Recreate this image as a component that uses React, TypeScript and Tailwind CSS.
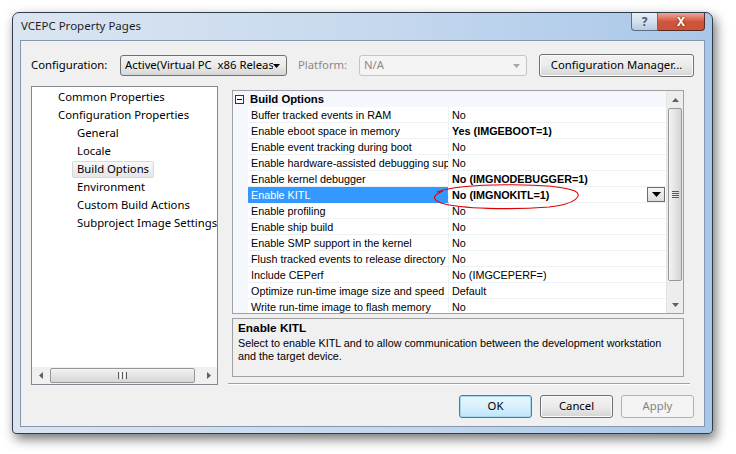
import React from 'react';

type Row = { name: string; value: string; bold?: boolean; selected?: boolean };

const ROWS: Row[] = [
  { name: 'Buffer tracked events in RAM', value: 'No' },
  { name: 'Enable eboot space in memory', value: 'Yes (IMGEBOOT=1)', bold: true },
  { name: 'Enable event tracking during boot', value: 'No' },
  { name: 'Enable hardware-assisted debugging support', value: 'No' },
  { name: 'Enable kernel debugger', value: 'No (IMGNODEBUGGER=1)', bold: true },
  { name: 'Enable KITL', value: 'No (IMGNOKITL=1)', bold: true, selected: true },
  { name: 'Enable profiling', value: 'No' },
  { name: 'Enable ship build', value: 'No' },
  { name: 'Enable SMP support in the kernel', value: 'No' },
  { name: 'Flush tracked events to release directory', value: 'No' },
  { name: 'Include CEPerf', value: 'No (IMGCEPERF=)' },
  { name: 'Optimize run-time image size and speed', value: 'Default' },
  { name: 'Write run-time image to flash memory', value: 'No' },
];

const TREE = [
  { label: 'Common Properties', depth: 0 },
  { label: 'Configuration Properties', depth: 0 },
  { label: 'General', depth: 1 },
  { label: 'Locale', depth: 1 },
  { label: 'Build Options', depth: 1, selected: true },
  { label: 'Environment', depth: 1 },
  { label: 'Custom Build Actions', depth: 1 },
  { label: 'Subproject Image Settings', depth: 1 },
];

function Arrow({ dir, color = '#4d4d4d' }: { dir: 'up' | 'down' | 'left' | 'right'; color?: string }) {
  const pts = {
    up: '0,4 3.5,0 7,4',
    down: '0,0 7,0 3.5,4',
    left: '4,0 4,7 0,3.5',
    right: '0,0 0,7 4,3.5',
  }[dir];
  const vertical = dir === 'up' || dir === 'down';
  return (
    <svg width={vertical ? 7 : 4} height={vertical ? 4 : 7} viewBox={vertical ? '0 0 7 4' : '0 0 4 7'}>
      <polygon points={pts} fill={color} />
    </svg>
  );
}

function Combo({ text, width, disabled }: { text: string; width: string; disabled?: boolean }) {
  return (
    <div
      className={`${width} h-[21px] flex items-center rounded-[3px] border pl-[4px] pr-[6px] ${
        disabled
          ? 'border-[#c5c5c5] bg-[#f4f4f4] text-[#8a8a8a]'
          : 'border-[#707070] bg-gradient-to-b from-[#f3f3f3] via-[#ebebeb] to-[#d6d6d6] text-black'
      }`}
    >
      <span className="flex-1 overflow-hidden whitespace-pre">{text}</span>
      <Arrow dir="down" color={disabled ? '#a6a6a6' : '#000'} />
    </div>
  );
}

function Button({ label, width, kind }: { label: string; width: string; kind?: 'default' | 'disabled' }) {
  const style =
    kind === 'default'
      ? 'border-[#3c7fb1] bg-gradient-to-b from-[#eaf6fd] via-[#d9f0fc] to-[#bee6fd] shadow-[inset_0_0_0_1px_#a7d8f3]'
      : kind === 'disabled'
      ? 'border-[#adb2b5] bg-[#f4f4f4] text-[#838383]'
      : 'border-[#707070] bg-gradient-to-b from-[#f2f2f2] via-[#ebebeb] to-[#d5d5d5] shadow-[inset_0_0_0_1px_#fcfcfc]';
  return (
    <div className={`${width} h-[23px] flex items-center justify-center rounded-[3px] border ${style}`}>{label}</div>
  );
}

export default function App() {
  return (
    <div className="w-[736px] h-[454px] bg-white overflow-hidden pl-[12px] pt-[12px] font-['Noto_Sans',sans-serif] text-[11.3px] text-black">
      {/* Window frame */}
      <div className="w-[701px] h-[422px] flex flex-col rounded-t-[7px] rounded-b-[4px] border border-[#2f3d4d] bg-gradient-to-r from-[#dbe5f1] via-[#c7d9ee] to-[#a9c7e9] shadow-[3px_5px_12px_rgba(0,0,0,0.55)] px-[7px] pb-[6px]">
        {/* Title bar */}
        <div className="h-[27px] flex items-start">
          <div className="pt-[4px] pl-[1px] text-[11.5px] text-[#1e1e1e] leading-[18px]">VCEPC Property Pages</div>
          <div className="ml-auto flex">
            <div className="w-[27px] h-[18px] flex items-center justify-center rounded-bl-[4px] border border-t-0 border-[#5d6d82] bg-gradient-to-b from-[#e7eef6] via-[#d4e0ee] to-[#b9cade] text-[12px] font-bold text-[#4a5a6e] leading-none">
              ?
            </div>
            <div className="w-[47px] h-[18px] flex items-center justify-center rounded-br-[4px] border border-l-0 border-t-0 border-[#5d2a22] bg-gradient-to-b from-[#e9a99a] via-[#d2543b] to-[#c9533c] text-[12px] font-bold text-white leading-none [text-shadow:0_0_2px_#3b1208]">
              X
            </div>
          </div>
        </div>

        {/* Client area */}
        <div className="flex-1 border border-[#8497ae] bg-[#f0f0f0] pt-[13px] px-[10px]">
          {/* Configuration row */}
          <div className="h-[23px] flex items-center">
            <div className="w-[89px]">Configuration:</div>
            <Combo text="Active(Virtual PC  x86 Release)" width="w-[167px]" />
            <div className="w-[72px] pl-[11px] text-[#8a8a8a]">Platform:</div>
            <Combo text="N/A" width="w-[168px]" disabled />
            <div className="ml-auto">
              <Button label="Configuration Manager..." width="w-[155px]" />
            </div>
          </div>

          {/* Main area */}
          <div className="mt-[9px] h-[299px] flex">
            {/* Tree */}
            <div className="w-[187px] h-full flex flex-col border border-[#828790] bg-white">
              <div className="flex-1 pt-[1px]">
                {TREE.map((t) => (
                  <div key={t.label} className="h-[18px] flex items-center">
                    <div
                      className={`${t.depth === 0 ? 'ml-[21px]' : 'ml-[40px]'} h-[17px] px-[4px] flex items-center whitespace-nowrap rounded-[2px] border ${
                        t.selected
                          ? 'border-[#d9d9d9] bg-gradient-to-b from-[#f8f8f8] to-[#e5e5e5]'
                          : 'border-transparent'
                      }`}
                    >
                      {t.label}
                    </div>
                  </div>
                ))}
              </div>
              <div className="h-[17px] flex items-center bg-[#f0f0f0]">
                <div className="w-[17px] flex justify-center">
                  <Arrow dir="left" color="#606060" />
                </div>
                <div className="ml-[1px] w-[145px] h-[15px] flex items-center justify-center rounded-[2px] border border-[#979797] bg-gradient-to-b from-[#f2f2f2] to-[#d6d6d6]">
                  <div className="flex gap-[1px]">
                    <div className="w-[1px] h-[7px] bg-[#5a5a5a]" />
                    <div className="w-[1px] h-[7px] bg-[#ffffff]" />
                    <div className="w-[1px] h-[7px] bg-[#5a5a5a]" />
                    <div className="w-[1px] h-[7px] bg-[#ffffff]" />
                    <div className="w-[1px] h-[7px] bg-[#5a5a5a]" />
                  </div>
                </div>
                <div className="flex-1" />
                <div className="w-[17px] flex justify-center">
                  <Arrow dir="right" color="#606060" />
                </div>
              </div>
            </div>

            {/* Right column */}
            <div className="ml-[14px] flex-1 flex flex-col pt-[4px] font-['Liberation_Sans',Arial,sans-serif] text-[10.8px]">
              {/* Property grid */}
              <div className="relative w-[452px] h-[224px] flex border border-[#a0a0a0] bg-white overflow-hidden">
                <div className="flex-1 flex flex-col overflow-hidden">
                  <div className="h-[16px] shrink-0 flex items-center bg-[#f4f7fc]">
                    <div className="ml-[2px] w-[9px] h-[9px] border border-[#333] bg-white flex items-center justify-center">
                      <div className="w-[5px] h-[1px] bg-black" />
                    </div>
                    <div className="ml-[6px] font-bold text-[11.3px]">Build Options</div>
                  </div>
                  {ROWS.map((r) => (
                    <div key={r.name} className="h-[16px] shrink-0 flex">
                      <div className="w-[15px] bg-[#f4f7fc]" />
                      <div
                        className={`w-[201px] pl-[3px] pt-[1px] flex items-center whitespace-nowrap overflow-hidden border-b border-r ${
                          r.selected ? 'bg-[#3399ff] text-white border-b-[#3399ff] border-r-[#f4f7fc]' : 'border-[#edf0f5]'
                        }`}
                      >
                        {r.name}
                      </div>
                      <div className="flex-1 pl-[3px] pt-[1px] flex items-center whitespace-nowrap border-b border-[#edf0f5]">
                        <span className={r.bold ? 'font-bold' : ''}>{r.value}</span>
                        {r.selected && (
                          <div className="ml-auto mr-[1px] -mt-[1px] w-[18px] h-[15px] flex items-center justify-center border border-[#6e6e6e] bg-gradient-to-b from-[#f5f5f5] to-[#dcdcdc]">
                            <svg width="9" height="5" viewBox="0 0 9 5">
                              <polygon points="0,0 9,0 4.5,5" fill="#000" />
                            </svg>
                          </div>
                        )}
                      </div>
                    </div>
                  ))}
                </div>
                {/* Vertical scrollbar */}
                <div className="w-[17px] flex flex-col bg-[#ededed] border-l border-[#e3e3e3]">
                  <div className="h-[17px] flex items-center justify-center">
                    <Arrow dir="up" color="#606060" />
                  </div>
                  <div className="h-[173px] mx-[1px] rounded-[2px] border border-[#979797] bg-gradient-to-r from-[#f3f3f3] to-[#d4d4d4] flex flex-col items-center justify-center gap-[1px]">
                    <div className="w-[7px] h-[1px] bg-[#5a5a5a]" />
                    <div className="w-[7px] h-[1px] bg-[#5a5a5a]" />
                    <div className="w-[7px] h-[1px] bg-[#5a5a5a]" />
                    <div className="w-[7px] h-[1px] bg-[#5a5a5a]" />
                  </div>
                  <div className="flex-1" />
                  <div className="h-[17px] flex items-center justify-center">
                    <Arrow dir="down" color="#606060" />
                  </div>
                </div>
                {/* Red highlight ellipse */}
                <svg className="absolute left-[198px] top-[91px] pointer-events-none" width="152" height="28" viewBox="0 0 152 28">
                  <path
                    d="M6 10 C 30 1, 120 0, 144 9 C 152 13, 146 22, 118 25 C 80 28, 30 27, 10 21 C 0 17, 2 13, 12 9"
                    fill="none"
                    stroke="#e00000"
                    strokeWidth="1.1"
                  />
                </svg>
              </div>

              {/* Description */}
              <div className="mt-[4px] w-[452px] h-[59px] border border-[#a0a0a0] bg-[#f0f0f0] px-[5px] pt-[2px] leading-[13px]">
                <div className="font-bold text-[11.8px] leading-[15px]">Enable KITL</div>
                <div className="mt-[1px]">Select to enable KITL and to allow communication between the development workstation</div>
                <div>and the target device.</div>
              </div>

              <div className="mt-auto -ml-[4px] w-[462px] h-[2px] border-t border-[#a0a0a0] border-b border-b-white" />
            </div>
          </div>

          {/* Buttons */}
          <div className="mt-[10px] flex justify-end gap-[8px]">
            <Button label="OK" width="w-[73px]" kind="default" />
            <Button label="Cancel" width="w-[73px]" />
            <Button label="Apply" width="w-[73px]" kind="disabled" />
          </div>
        </div>
      </div>
    </div>
  );
}
